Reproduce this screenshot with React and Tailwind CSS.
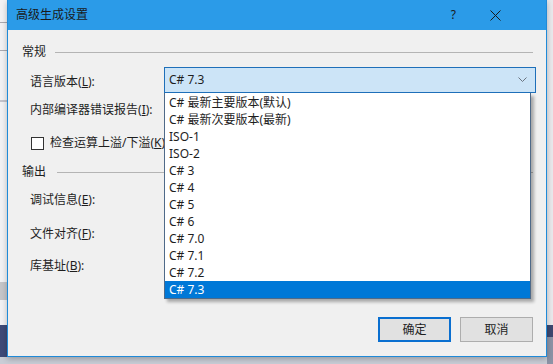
import React from "react";

const items = [
  "C# 最新主要版本(默认)",
  "C# 最新次要版本(最新)",
  "ISO-1",
  "ISO-2",
  "C# 3",
  "C# 4",
  "C# 5",
  "C# 6",
  "C# 7.0",
  "C# 7.1",
  "C# 7.2",
  "C# 7.3",
];

function Label({ children, k, tail }) {
  return (
    <span className="text-[12px] text-[#1e1e1e] leading-none">
      {children}(<u>{k}</u>){tail}
    </span>
  );
}

export default function App() {
  return (
    <div
      className="relative w-[553px] h-[364px] overflow-hidden bg-[#c9cdd6]"
      style={{ fontFamily: '"Noto Sans", "Noto Sans CJK SC", sans-serif' }}
    >
      {/* background: left strip */}
      <div className="absolute left-0 top-0 w-[7px] h-[357px] bg-[#f2f2f4] flex flex-col">
        <div className="h-[22px]" />
        <div className="h-[1px] bg-[#a9a9b0]" />
        <div className="h-[27px]" />
        <div className="h-[1px] bg-[#a9a9b0]" />
        <div className="h-[49px]" />
        <div className="h-[2px] bg-[#c4c4cc]" />
        <div className="h-[180px]" />
        <div className="h-[18px] bg-[#c6c6c9]" />
        <div className="h-[25px]" />
        <div className="h-[32px] bg-[#3e4a78]" />
      </div>
      {/* background: right strip */}
      <div className="absolute right-0 top-0 w-[6px] h-[364px] bg-[#e9e9ec] flex flex-col">
        <div className="h-[325px]" />
        <div className="h-[12px] bg-[#3d4870]" />
        <div className="flex-1 bg-[#8c93a6]" />
      </div>

      {/* dialog */}
      <div className="absolute left-[7px] top-0 w-[540px] h-[357px] border border-[#1f8ad8] border-t-0 bg-[#f0f0f0] flex flex-col shadow-[0_2px_6px_rgba(0,0,0,0.25)]">
        {/* title bar */}
        <div className="h-[30px] bg-[#2b9be8] flex items-center pl-[8px]">
          <span className="text-[12px] text-[#1a1a1a] leading-none">高级生成设置</span>
          <div className="flex-1" />
          <span className="text-[12px] text-[#1a1a1a] mr-[34px] leading-none">?</span>
          <svg width="11" height="11" viewBox="0 0 11 11" className="mr-[45px]">
            <path d="M0.5 0.5L10.5 10.5M10.5 0.5L0.5 10.5" stroke="#1a1a1a" strokeWidth="1" />
          </svg>
        </div>

        {/* body */}
        <div className="flex flex-col pl-[14px] pr-[10px]">
          <div className="h-[14px]" />
          <div className="h-[16px] flex items-center">
            <span className="text-[12px] text-[#1e1e1e] leading-none">常规</span>
            <div className="ml-[9px] flex-1 h-[1px] bg-[#b4b4b4] mr-[3px]" />
          </div>
          <div className="h-[7px]" />
          <div className="h-[26px] flex items-center pl-[8px]">
            <div className="w-[134px]">
              <Label k="L" tail=":">语言版本</Label>
            </div>
            <div className="w-[372px] h-[26px] border border-[#1e6fb9] bg-[#cce4f7] flex items-center pl-[4px] pr-[8px]">
              <span className="text-[12px] text-[#1e1e1e] leading-none">C# 7.3</span>
              <div className="flex-1" />
              <svg width="9" height="6" viewBox="0 0 9 6">
                <path d="M0.5 0.5L4.5 4.5L8.5 0.5" stroke="#6a7480" strokeWidth="1" fill="none" />
              </svg>
            </div>
          </div>
          <div className="h-[4px]" />
          <div className="h-[26px] flex items-center pl-[8px]">
            <Label k="I" tail=":">内部编译器错误报告</Label>
          </div>
          <div className="h-[7px]" />
          <div className="h-[26px] flex items-center pl-[9px]">
            <div className="w-[13px] h-[13px] border border-[#333] bg-white" />
            <span className="ml-[6px] text-[12px] text-[#1e1e1e] leading-none">
              检查运算上溢/下溢(<u>K</u>)
            </span>
          </div>
          <div className="h-[8px]" />
          <div className="h-[16px] flex items-center">
            <span className="text-[12px] text-[#1e1e1e] leading-none">输出</span>
            <div className="ml-[11px] flex-1 h-[1px] bg-[#b4b4b4] mr-[3px]" />
          </div>
          <div className="h-[7px]" />
          <div className="h-[26px] flex items-center pl-[8px]">
            <Label k="E" tail=":">调试信息</Label>
          </div>
          <div className="h-[8px]" />
          <div className="h-[26px] flex items-center pl-[8px]">
            <Label k="F" tail=":">文件对齐</Label>
          </div>
          <div className="h-[6px]" />
          <div className="h-[26px] flex items-center pl-[8px]">
            <Label k="B" tail=":">库基址</Label>
          </div>
        </div>

        <div className="flex-1" />
        {/* buttons */}
        <div className="flex justify-end gap-[9px] pr-[13px] pb-[14px]">
          <button className="w-[73px] h-[25px] border-2 border-[#0a6fd0] bg-[#e1e1e1] text-[12px] text-[#1e1e1e] flex items-center justify-center leading-none">
            确定
          </button>
          <button className="w-[73px] h-[25px] border border-[#adadad] bg-[#e1e1e1] text-[12px] text-[#1e1e1e] flex items-center justify-center leading-none">
            取消
          </button>
        </div>
      </div>

      {/* dropdown list overlay */}
      <div className="absolute left-[164px] top-[93px] w-[367px] h-[206px] bg-white border border-[#4f6a89] border-t-0 shadow-[3px_3px_3px_rgba(0,0,0,0.3)] flex flex-col pt-[1px]">
        {items.map((t, i) => (
          <div
            key={t}
            className={
              i === items.length - 1
                ? "h-[17px] flex items-center pl-[4px] bg-[#0078d7] text-white text-[12px] leading-none"
                : "h-[17px] flex items-center pl-[4px] text-[#1e1e1e] text-[12px] leading-none"
            }
          >
            {t}
          </div>
        ))}
      </div>
    </div>
  );
}
